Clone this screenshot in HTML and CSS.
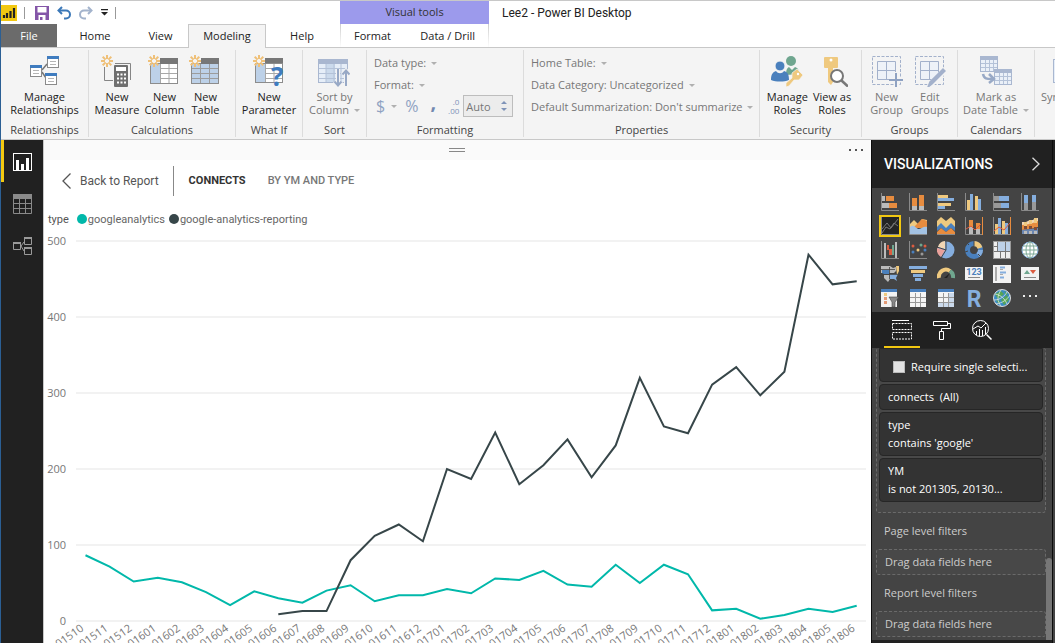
FILE: index.html
```html
<!DOCTYPE html>
<html lang="en">
<head>
<meta charset="utf-8">
<title>Lee2 - Power BI Desktop</title>
<link rel="stylesheet" href="styles.css">
</head>
<body>
<svg class="defs" aria-hidden="true">
  <defs>
    <g id="sun" stroke="#efc078" stroke-width="2" fill="none">
      <path d="M6 0v4M6 8v4M0 6h4M8 6h4M1.7 1.7l2.9 2.9M7.4 7.4l2.9 2.9M10.3 1.7L7.4 4.6M4.6 7.4l-2.9 2.9"/>
    </g>
    <g id="note">
      <rect x=".5" y=".5" width="11" height="11" fill="#fff" stroke="#8a8a8a"/>
      <rect width="12" height="3" fill="#3f7cbf"/>
      <path d="M3 5.5h6M3 8.5h6" stroke="#b5b5b5"/>
    </g>
    <g id="minitable">
      <rect x=".5" y=".5" width="17" height="15" fill="#eaf0f8" stroke="#a9b7d0"/>
      <rect width="18" height="4" fill="#a9b7d0"/>
      <path d="M1 7.5h16M1 11.5h16M5.500 4v11M9.500 4v11M13.500 4v11" stroke="#b4c2d8"/>
    </g>
  </defs>
</svg>

<div class="app">
  <header class="top">
    <div class="top-left">
      <div class="quick">
        <svg class="logo" width="16" height="16" viewBox="0 0 16 16"><rect width="16" height="16" fill="#f2c811"/><path d="M3 13v-3M6 13V8M9.500 13V6M13 13V3" stroke="#222" stroke-width="2.200"/></svg>
        <span class="bar"></span>
        <button aria-label="Save"><svg width="14" height="14" viewBox="0 0 14 14"><path d="M0 0h14v14H0z" fill="#8456a8"/><path d="M2.500 1h9v5.500h-9z" fill="#fff"/><path d="M3.500 9h7v5h-7z" fill="#fff"/><path d="M5 11h2.500v3H5z" fill="#8456a8"/></svg></button>
        <button aria-label="Undo"><svg width="14" height="14" viewBox="0 0 14 14" fill="none" stroke="#3b78b8" stroke-width="2"><path d="M5 1L1.500 4.500 5 8"/><path d="M2 4.500h7a4 4 0 0 1 0 8H7"/></svg></button>
        <button aria-label="Redo"><svg width="14" height="14" viewBox="0 0 14 14" fill="none" stroke="#a3b3cc" stroke-width="2"><path d="M9 1l3.500 3.500L9 8"/><path d="M12 4.500H5a4 4 0 0 0 0 8h2"/></svg></button>
        <button aria-label="Customize"><svg width="7" height="7" viewBox="0 0 7 7"><path d="M0 0h7v1.300H0zM0 3h7L3.500 6.500z" fill="#222"/></svg></button>
        <span class="bar"></span>
      </div>
      <nav class="tabs">
        <button class="tab file">File</button>
        <button class="tab home">Home</button>
        <button class="tab view">View</button>
        <button class="tab active">Modeling</button>
        <button class="tab help">Help</button>
      </nav>
    </div>
    <div class="context">
      <div class="context-title">Visual tools</div>
      <div class="context-tabs">
        <button class="tab">Format</button>
        <button class="tab">Data / Drill</button>
      </div>
    </div>
    <div class="window-title">Lee2 - Power BI Desktop</div>
  </header>

  <section class="ribbon">
    <div class="group g-rel">
      <div class="cmds">
        <button class="cmd"><svg width="32" height="32" viewBox="-1 -1 32 32"><path d="M12 14l5-6M12 16l4 6" stroke="#777" stroke-width="1.500" fill="none"/><use href="#note" x="17"/><use href="#note" y="9"/><use href="#note" x="15" y="17"/></svg>Manage<br>Relationships</button>
      </div>
      <div class="name">Relationships</div>
    </div>
    <div class="group g-calc">
      <div class="cmds">
        <button class="cmd"><svg width="32" height="32" viewBox="0 0 32 32"><path d="M3.500 12v13.500H12M14 8.500h15.500V25" fill="none" stroke="#858585"/><rect x="13" y="10" width="14" height="22" rx="1" fill="#707070"/><path d="M15 12h10v4H15z" fill="#fff"/><path d="M16 19.500h9M16 23.500h9M16 27.500h9" stroke="#fff" stroke-width="2" stroke-dasharray="2 1.500"/><use href="#sun"/></svg>New<br>Measure</button>
        <button class="cmd"><svg width="32" height="32" viewBox="0 0 32 32"><rect x="2.500" y="8.500" width="27" height="20" fill="#fff" stroke="#8c8c8c"/><path d="M3 9h9v19H3z" fill="#bdd1e8"/><path d="M12 3h18v6H12z" fill="#777"/><path d="M12.500 9v19M21 9v19M12 13.500h17M12 18.500h17M12 23.500h17" stroke="#a8a8a8"/><use href="#sun"/></svg>New<br>Column</button>
        <button class="cmd"><svg width="32" height="32" viewBox="0 0 32 32"><rect x="2.500" y="8.500" width="27" height="20" fill="#bdd1e8" stroke="#8c8c8c"/><path d="M12 3h18v6H12z" fill="#777"/><path d="M11.500 9v19M20.500 9v19M3 13.500h26M3 18.500h26M3 23.500h26" stroke="#9c9c9c"/><use href="#sun"/></svg>New<br>Table</button>
      </div>
      <div class="name">Calculations</div>
    </div>
    <div class="group g-what">
      <div class="cmds">
        <button class="cmd"><svg width="32" height="32" viewBox="0 0 32 32"><rect x="2.500" y="8.500" width="27" height="19" fill="#fff" stroke="#8c8c8c"/><path d="M3 9h9v18H3z" fill="#bdd1e8"/><path d="M12 3h18v5H12z" fill="#777"/><path d="M12.500 9v18M21 9v18M12 13.500h17M12 18.500h17M12 23.500h17" stroke="#a8a8a8"/><text x="18" y="31" class="qmark">?</text><use href="#sun"/></svg>New<br>Parameter</button>
      </div>
      <div class="name">What If</div>
    </div>
    <div class="group g-sort">
      <div class="cmds">
        <button class="cmd off"><svg width="32" height="32" viewBox="0 0 32 32"><rect x=".5" y="4.500" width="29" height="23" fill="#e6eef8" stroke="#a9b7d0"/><path d="M8 9h9v18H8z" fill="#cbdaec"/><path d="M0 4h30v5H0z" fill="#a9b7d0"/><path d="M8 9v18M16 9v18M23 9v18M1 13.500h28M1 18.500h28M1 23.500h28" stroke="#b4c2d8"/><path d="M20 14v16M16.500 26.500L20 30.500l3.500-4M28 31V16M24.500 19.500L28 15.500l3.500 4" stroke="#f4f4f4" stroke-width="4" fill="none"/><path d="M20 14v16M16.500 26.500L20 30.500l3.500-4M28 31V16M24.500 19.500L28 15.500l3.500 4" stroke="#98a9c6" stroke-width="2" fill="none"/></svg>Sort by<br>Column <i class="caret"></i></button>
      </div>
      <div class="name">Sort</div>
    </div>
    <div class="group g-format">
      <div class="rows">
        <button class="line">Data type: <i class="caret"></i></button>
        <button class="line">Format: <i class="caret"></i></button>
        <div class="fmt">
          <button class="sym">$</button><i class="caret"></i>
          <button class="sym">%</button>
          <button class="sym comma">,</button>
          <label class="dec" for="decimals"><span>.0</span><span>.00</span></label>
          <span class="spin">
            <input id="decimals" type="text" value="Auto">
            <span class="steps"><button aria-label="More decimals"><i class="up"></i></button><button aria-label="Fewer decimals"><i class="down"></i></button></span>
          </span>
        </div>
      </div>
      <div class="name">Formatting</div>
    </div>
    <div class="group g-props">
      <div class="rows">
        <button class="line">Home Table: <i class="caret"></i></button>
        <button class="line">Data Category: Uncategorized <i class="caret"></i></button>
        <button class="line">Default Summarization: Don't summarize <i class="caret"></i></button>
      </div>
      <div class="name">Properties</div>
    </div>
    <div class="group g-sec">
      <div class="cmds">
        <button class="cmd"><svg width="32" height="32" viewBox="0 0 32 32"><circle cx="20" cy="6" r="5" fill="#6fa68f"/><path d="M15 20c0-5 1-7 3-8l3 3 3-3c3 1 4 3 4 7z" fill="#6fa68f"/><circle cx="9" cy="11" r="5" fill="#4a80bd" stroke="#f4f4f4"/><path d="M0 25c0-6 2-8 5-9 2 3 6 3 8 0 4 1 5 4 5 9-5 2-13 2-18 0z" fill="#4a80bd"/><path d="M26 14l6 6-4 5-5 0-5 6-3 1v-4l6-5v-5z" fill="#efc97f" stroke="#f4f4f4" stroke-width=".7"/><circle cx="27" cy="19" r="1.200" fill="#fff"/></svg>Manage<br>Roles</button>
        <button class="cmd"><svg width="32" height="32" viewBox="0 0 32 32"><path d="M8 3q0-1 1-1h12q1 0 1 1v9q0 1-1 1h-4v14l-2 3-3-3V13H9q-1 0-1-1z" fill="#efc97f"/><circle cx="15" cy="5" r="1.500" fill="#fff"/><circle cx="21" cy="21" r="6" fill="#fff" stroke="#777" stroke-width="2"/><path d="M25.500 25.500L32 31.500" stroke="#777" stroke-width="2.600"/></svg>View as<br>Roles</button>
      </div>
      <div class="name">Security</div>
    </div>
    <div class="group g-groups">
      <div class="cmds">
        <button class="cmd off"><svg width="32" height="32" viewBox="0 0 32 32" fill="none" stroke="#a3b1cb"><rect x="1.500" y="1.500" width="28" height="28" stroke-dasharray="3 1.500"/><path d="M6.500 6.500h18v18h-18zM15.500 6.500v18M6.500 15.500h18" fill="#eef2f8"/><path d="M25 17v15M18 25h14" stroke="#f4f4f4" stroke-width="4"/><path d="M25 18v14M18 25h14" stroke="#8fa2c2" stroke-width="2"/></svg>New<br>Group</button>
        <button class="cmd off"><svg width="32" height="32" viewBox="0 0 32 32" fill="none" stroke="#a3b1cb"><rect x="1.500" y="1.500" width="28" height="28" stroke-dasharray="3 1.500"/><path d="M6.500 6.500h18v18h-18zM15.500 6.500v18M6.500 15.500h18" fill="#eef2f8"/><path d="M15 31L32 14" stroke="#f4f4f4" stroke-width="6"/><path d="M14 32l2-5 13-13 2 2-13 13z" fill="#a3b1cb" stroke-width="1.500"/></svg>Edit<br>Groups</button>
      </div>
      <div class="name">Groups</div>
    </div>
    <div class="group g-cal">
      <div class="cmds">
        <button class="cmd off"><svg width="32" height="32" viewBox="0 0 32 32"><use href="#minitable" y="1"/><use href="#minitable" x="14" y="14"/><path d="M3 19c1 5 4 5 9 5M9 19l5 5-5 4" stroke="#98a9c6" stroke-width="2.500" fill="none"/></svg>Mark as<br>Date Table <i class="caret"></i></button>
      </div>
      <div class="name">Calendars</div>
    </div>
    <div class="group g-sync">
      <div class="cmds">
        <button class="cmd off"><svg width="32" height="32" viewBox="0 0 32 32"><rect x=".5" y="4.500" width="28" height="23" fill="#e6eef8" stroke="#a9b7d0"/></svg>Sync</button>
      </div>
    </div>
  </section>

  <div class="work">
    <nav class="rail">
      <button class="on" aria-label="Report view"><svg width="19" height="18" viewBox="0 0 19 18"><rect x=".5" y=".5" width="18" height="17" fill="none" stroke="#fff"/><path d="M4.500 17V7M9.500 17v-6M14.500 17V5" stroke="#fff" stroke-width="3"/></svg></button>
      <button aria-label="Data view"><svg width="19" height="20" viewBox="0 0 19 20" fill="none" stroke="#8a8a8a"><path d="M0 2.500h19" stroke-width="5"/><path d="M.5 4v15.500h18V4M6.500 4v15M12.500 4v15M0 9.500h19M0 14.500h19"/></svg></button>
      <button aria-label="Relationships view"><svg width="19" height="18" viewBox="0 0 19 18" fill="none" stroke="#9a9a9a"><path d="M.5 5.500h7v7h-7zM11.500 .5h7v7h-7zM11.500 10.500h7v7h-7zM8 9l3-4M8 9l3 5"/><path d="M0 6h8M11 1h8M11 11h8" stroke-width="2"/></svg></button>
    </nav>

    <main class="canvas">
      <div class="strip"><span></span><span class="grip"></span><button class="dots" aria-label="More options"><i></i><i></i><i></i></button></div>
      <div class="drill">
        <button class="back"><svg width="9" height="16" viewBox="0 0 9 16" fill="none" stroke="#555" stroke-width="1.300"><path d="M8.500 .5L1 8l7.500 7.500"/></svg>Back to Report</button>
        <h1>CONNECTS</h1>
        <span class="by">BY YM AND TYPE</span>
      </div>
      <div class="legend"><span class="ltitle">type</span><span class="key teal">googleanalytics</span><span class="key dark">google-analytics-reporting</span></div>
      <svg class="chart" id="chart" viewBox="0 0 827 420" role="img" aria-label="Connects by YM and type"></svg>
    </main>

    <aside class="panel">
      <header class="phead"><h2>VISUALIZATIONS</h2><button aria-label="Collapse"><svg width="8" height="14" viewBox="0 0 8 14" fill="none" stroke="#ddd" stroke-width="1.300"><path d="M.5 .8L7 7 .5 13.200"/></svg></button></header>
      <div class="viz">
        <button aria-label="Stacked bar"><svg viewBox="0 0 18 18"><path d="M.5 0v17.500H18" class="ax"/><path d="M1 3h3v5H1zM1 10h7v5H1z" fill="#bbb"/><path d="M5 3h8v5H5zM8 10h8v5H8z" fill="#e78c3f"/></svg></button>
        <button aria-label="Stacked column"><svg viewBox="0 0 18 18"><path d="M.5 0v17.500H18" class="ax"/><path d="M3 12h5v5H3zM10 13h5v4h-5z" fill="#bbb"/><path d="M3 5h5v8H3zM10 2h5v11h-5z" fill="#e78c3f"/></svg></button>
        <button aria-label="Clustered bar"><svg viewBox="0 0 18 18"><path d="M.5 0v17.500H18" class="ax"/><path d="M1 2h10v3H1zM1 10h13v3H1z" fill="#efc97f"/><path d="M1 5h16v3H1zM1 13h7v3H1z" fill="#85aede"/></svg></button>
        <button aria-label="Clustered column"><svg viewBox="0 0 18 18"><path d="M.5 0v17.500H18" class="ax"/><path d="M2 7h3v10H2zM10 3h3v14h-3z" fill="#efc97f"/><path d="M5 1h3v16H5zM13 6h3v11h-3z" fill="#85aede"/></svg></button>
        <button aria-label="100% bar"><svg viewBox="0 0 18 18"><path d="M.5 0v17.500H18" class="ax"/><path d="M1 3h5v5H1zM1 10h7v5H1z" fill="#999"/><path d="M6 3h10v5H6zM8 10h8v5H8z" fill="#85aede"/></svg></button>
        <button aria-label="100% column"><svg viewBox="0 0 18 18"><path d="M.5 0v17.500H18" class="ax"/><path d="M3 10h4v7H3zM11 8h4v9h-4z" fill="#999"/><path d="M3 2h4v8H3zM11 2h4v7h-4z" fill="#85aede"/></svg></button>

        <button class="picked" aria-label="Line"><svg viewBox="0 0 18 18"><path d="M.5 0v17.500H18" class="ax"/><path d="M1 12l5-6 4 5 7-9M1 16l4-6 4 2 4-6 4 3" fill="none" stroke="#777"/></svg></button>
        <button aria-label="Area"><svg viewBox="0 0 18 18"><path d="M1 7l4-4 4 4 4-5 5 1v7H1z" fill="#efc97f"/><path d="M5 10l8-8 5 2v7H5z" fill="#e78c3f"/><path d="M1 10c4-4 6 2 9 2s4-3 8-2v7H1z" fill="#a3c2e3"/><path d="M.5 0v17.500H18" class="ax"/></svg></button>
        <button aria-label="Stacked area"><svg viewBox="0 0 18 18"><path d="M0 4l4-4 5 4 5-4 4 4v8l-4-4-5 4-5-4-4 4z" fill="#efc97f"/><path d="M0 10l4-4 5 5 5-5 4 4v4l-4-3-5 4-5-4-4 3z" fill="#4a80bd"/><path d="M0 15l4-4 5 4 5-4 4 4v2H0z" fill="#e78c3f"/><path d="M0 17.500h18" class="ax"/></svg></button>
        <button aria-label="Line and stacked column"><svg viewBox="0 0 18 18"><path d="M.5 0v17.500H17.500" class="ax"/><path d="M17.500 0v18" stroke="#e78c3f"/><path d="M4 3h4v7H4zM11 6h4v6h-4z" fill="#e78c3f"/><path d="M4 10h4v7H4zM11 12h4v5h-4z" fill="#bbb"/><path d="M1 12l5-3 4 4 6-6" fill="none" stroke="#e05a3a"/></svg></button>
        <button aria-label="Line and clustered column"><svg viewBox="0 0 18 18"><path d="M.5 0v17.500H17.500" class="ax"/><path d="M17.500 0v18" stroke="#e78c3f"/><path d="M2 7h3v10H2zM9 4h3v13H9z" fill="#efc97f"/><path d="M5 1h3v16H5zM12 6h3v11h-3z" fill="#85aede"/><path d="M1 14l5-4 5 3 6-7" fill="none" stroke="#e05a3a"/></svg></button>
        <button aria-label="Ribbon"><svg viewBox="0 0 18 18"><path d="M1 5h4l4-2h3l2-2h3v6l-8 2-8 1z" fill="#f1d6b4"/><path d="M1 8l8-1 8-3v6l-8 2-8 1z" fill="#e78c3f"/><path d="M1 13l8-1 8-1v6H1z" fill="#6c87b1"/><path d="M3 5h3v4H3zM8 3h3v4H8zM13 1h3v5h-3z" fill="#efc97f"/><path d="M3 9h3v3H3zM8 9h3v3H8zM13 10h3v3h-3z" fill="#804b35"/><path d="M3 14h3v3H3zM8 14h3v3H8zM13 14h3v3h-3z" fill="#bbb"/></svg></button>

        <button aria-label="Waterfall"><svg viewBox="0 0 18 18"><path d="M.5 0v17.500H18" class="ax"/><path d="M3 2h2v15H3zM14 1h2v16h-2z" fill="#bbb"/><path d="M6 4h2v5H6zM8 8h3v6H8z" fill="#dc5c40"/><path d="M11 4h2v10h-2z" fill="#6fa68f"/></svg></button>
        <button aria-label="Scatter"><svg viewBox="0 0 18 18"><path d="M.5 0v17.500H18" class="ax"/><g><circle cx="4" cy="5" r="1.500" fill="#dc5c40"/><circle cx="12" cy="4" r="1.500" fill="#6fa68f"/><circle cx="9" cy="9" r="1.500" fill="#efc97f"/><circle cx="4" cy="11" r="1.500" fill="#4a80bd"/><circle cx="16" cy="5" r="1.500" fill="#dc5c40"/><circle cx="16" cy="9" r="1.500" fill="#4a80bd"/><circle cx="13" cy="13" r="1.500" fill="#999"/></g></svg></button>
        <button aria-label="Pie"><svg viewBox="0 0 18 18"><circle cx="9" cy="9" r="8.500" fill="#85aede"/><path d="M8 8V0A8 8 0 0 0 1 6z" fill="#f1d6b4"/><path d="M8 9L0 7a9 9 0 0 0 4 9z" fill="#e9a19b"/><path d="M9 0v9L4 17M9 9L0 6" stroke="#444" fill="none"/></svg></button>
        <button aria-label="Donut"><svg viewBox="0 0 18 18" fill="none" stroke-width="5"><circle cx="9" cy="9" r="6.500" stroke="#4a80bd"/><path d="M9 2.500A6.500 6.500 0 0 1 15 7" stroke="#efc97f"/><path d="M15.500 9A6.500 6.500 0 0 1 13 14" stroke="#85aede"/><path d="M3 10l-3 1M9 0v5M13 13l3 3M4 4L1 1" stroke="#444" stroke-width="1"/></svg></button>
        <button aria-label="Treemap"><svg viewBox="0 0 18 18"><path d="M0 0h18v18H0z" fill="#eee"/><path d="M5 1h7v9H5zM13 1h4v9h-4z" fill="#bdd1e8"/><path d="M4.500 0v10M12.500 0v10M0 10.500h18M7.500 11v7M12.500 11v7M0 5.500h4" stroke="#777"/><rect x=".5" y=".5" width="17" height="17" fill="none" stroke="#999"/></svg></button>
        <button aria-label="Map"><svg viewBox="0 0 18 18" fill="none" stroke="#7eaa98"><circle cx="9" cy="9" r="8" fill="#fff" stroke="#85aede"/><ellipse cx="9" cy="9" rx="4" ry="8"/><path d="M9 1v16M1 9h16M2 5h14M2 13h14"/></svg></button>

        <button aria-label="Filled map"><svg viewBox="0 0 18 18"><path d="M0 1h9l3 2 3-1v4l-2 2H0z" fill="#bbb"/><path d="M1 5h7v4H3L1 8z" fill="#4a80bd"/><path d="M3 10h6v4l-2 3-4-4z" fill="#bbb"/><path d="M9 9h8l-2 4 1 3-3-2H9z" fill="#85aede"/><path d="M15 1h3v5l-2 4z" fill="#efc97f"/><path d="M0 4.500h14M8.500 2v12M3 9.500h14" stroke="#444" stroke-width=".8"/></svg></button>
        <button aria-label="Funnel"><svg viewBox="0 0 18 18"><path d="M0 1h18v3H0z" fill="#85aede"/><path d="M2 5h14v3H2z" fill="#efc97f"/><path d="M4 9h10v3H4z" fill="#85aede"/><path d="M6 13h6v3H6z" fill="#85aede"/></svg></button>
        <button aria-label="Gauge"><svg viewBox="0 0 18 18" fill="none" stroke-width="4"><path d="M2 13a7 7 0 0 1 11-7" stroke="#efc97f"/><path d="M13 6a7 7 0 0 1 3 7" stroke="#6fa68f"/><path d="M7 13l6-5-3 5z" fill="#222" stroke="none"/></svg></button>
        <button aria-label="Card"><svg viewBox="0 0 18 18"><path d="M0 2h18v13H0z" fill="#f2f2f2"/><text x="9" y="10" class="n123">123</text><path d="M3 12.500h12" stroke="#888"/></svg></button>
        <button aria-label="Multi-row card"><svg viewBox="0 0 18 18"><path d="M0 0h18v18H0z" fill="#f2f2f2"/><path d="M2 2h2v14H2z" fill="#aaa"/><path d="M7 2.500h5M7 7.500h6M7 12.500h4" stroke="#85aede" stroke-width="2"/><path d="M7 4.500h3M7 9.500h3" stroke="#aaa"/></svg></button>
        <button aria-label="KPI"><svg viewBox="0 0 18 18"><path d="M0 2h18v13H0z" fill="#f2f2f2"/><path d="M3 9l3-4 3 4z" fill="#6fa68f"/><path d="M9 5h6l-3 4z" fill="#dc5c40"/><path d="M3 12.500h12" stroke="#888"/></svg></button>

        <button aria-label="Slicer"><svg viewBox="0 0 18 18"><path d="M0 1h16v17H0z" fill="#f2f2f2"/><path d="M0 0h16v3H0z" fill="#4a80bd"/><path d="M3 4h3v3H3z" fill="#efc97f"/><path d="M3 8h3v3H3zM3 12h3v3H3z" fill="#e39a76"/><path d="M8 8h10l-4 5v5h-3v-5z" fill="#888" stroke="#444" stroke-width=".6"/></svg></button>
        <button aria-label="Table"><svg viewBox="0 0 18 18"><path d="M1 1h16v17H1z" fill="#f5f5f5"/><path d="M1 0h16v3H1z" fill="#4a80bd"/><path d="M6.500 4v14M11.500 4v14M1 8.500h16M1 13.500h16" stroke="#999"/></svg></button>
        <button aria-label="Matrix"><svg viewBox="0 0 18 18"><path d="M1 1h16v17H1z" fill="#f5f5f5"/><path d="M1 0h16v3H1z" fill="#4a80bd"/><path d="M12 4h5v14h-5zM1 14h16v4H1z" fill="#cbdaec"/><path d="M6.500 4v14M11.500 4v14M1 8.500h16M1 13.500h16" stroke="#999"/></svg></button>
        <button aria-label="R script visual"><svg viewBox="0 0 18 18"><text x="9" y="18" class="rbig">R</text></svg></button>
        <button aria-label="ArcGIS map"><svg viewBox="0 0 18 18" fill="none"><circle cx="9" cy="9" r="8.500" fill="#3b8bc4" stroke="#ddd"/><path d="M2 5l6-3 3 3-6 5zM8 11l6-5 2 5-5 5zM11 2l4 3-2 1zM3 11l4 1-1 3z" fill="#55a455"/><path d="M1 11c6 0 11-4 13-8M3 15c6-1 11-4 14-9M2 5c6 1 10 5 12 10M8 1c-4 6-4 11 0 16" stroke="#d9e6e0" stroke-width=".8"/></svg></button>
        <button aria-label="More visuals"><svg viewBox="0 0 18 18"><path d="M2 6h2v2H2zM8 6h2v2H8zM14 6h2v2h-2z" fill="#eee"/></svg></button>
      </div>
      <div class="ptabs">
        <button class="on" aria-label="Fields"><svg width="20" height="20" viewBox="0 0 20 20" fill="none" stroke="#fff"><path d="M0 .5h17"/><path d="M.5 3.500h19v6H.5zM.5 12.500h19v6.500H.5z" stroke-dasharray="2 1"/></svg></button>
        <button aria-label="Format"><svg width="20" height="20" viewBox="0 0 20 20" fill="none" stroke="#fff"><path d="M1.500 1.500h14v4h-14zM15.500 3.500h3v5h-9v3M7.500 11.500h4v8h-4z"/></svg></button>
        <button aria-label="Analytics"><svg width="20" height="20" viewBox="0 0 20 20" fill="none" stroke="#fff"><circle cx="8.500" cy="8.500" r="8"/><path d="M14.500 14.500l5 5" stroke-width="1.500"/><path d="M1 9l5-3 3 2 5-5M4.500 11v4M7.500 9v7M10.500 10v6M13.500 7v7"/></svg></button>
      </div>
      <div class="filters">
        <div class="well">
          <div class="card first"><label for="single"><input id="single" type="checkbox">Require single selecti...</label></div>
          <div class="card">connects &nbsp;(All)</div>
          <div class="card">type<br>contains 'google'</div>
          <div class="card">YM<br>is not 201305, 20130...</div>
        </div>
        <h3>Page level filters</h3>
        <div class="drop">Drag data fields here</div>
        <h3>Report level filters</h3>
        <div class="drop">Drag data fields here</div>
        <span class="thumb"></span>
      </div>
    </aside>
    <div class="next"></div>
  </div>
</div>
<script src="chart.js"></script>
</body>
</html>
```
FILE: styles.css
```css
* { box-sizing: border-box; }

body {
  margin: 0;
  font-family: "Open Sans", "Noto Sans", sans-serif;
  font-size: 11px;
  color: #222;
  background: #fff;
}

button {
  margin: 0;
  padding: 0;
  border: 0;
  background: none;
  font: inherit;
  color: inherit;
}

svg { display: block; }
.defs { position: absolute; width: 0; height: 0; }

.app {
  display: flex;
  flex-direction: column;
  height: 100vh;
  overflow: hidden;
  border-left: 1px solid #2b5f94;
  border-top: 1px solid #c8c8c8;
}

/* Title bar and tabs */
.top { display: flex; flex: none; border-bottom: 1px solid #c8c8c8; }
.top-left { display: flex; flex-direction: column; width: 339px; }
.quick { display: flex; align-items: center; gap: 8px; height: 23px; }
.quick .bar { width: 1px; height: 12px; margin: 0 2px 0 -1px; background: #999; }
.tabs { display: flex; }
.tab { height: 23px; padding: 0 14px; color: #222; white-space: nowrap; }
.file { width: 56px; background: #6b6b6b; color: #fff; }
.home { width: 76px; }
.view { width: 55px; }
.help { width: 72px; }
.active {
  width: 78px;
  height: 24px;
  margin-bottom: -1px;
  padding-bottom: 2px;
  border: 1px solid #c8c8c8;
  border-bottom: 0;
  background: #f4f4f4;
}
.context { display: flex; flex-direction: column; width: 149px; }
.context-title { height: 23px; line-height: 21px; text-align: center; background: #9c9aec; color: #333; }
.context-tabs {
  display: flex;
  justify-content: space-between;
  border: solid;
  border-width: 0 1px;
  border-image: linear-gradient(#ccc, #fff) 1;
}
.context-tabs .tab { padding: 0 13px; }
.window-title { padding: 5px 13px; font-family: Roboto, sans-serif; font-size: 12px; line-height: 15px; }

/* Ribbon */
.ribbon { display: flex; flex: none; height: 92px; background: #f4f4f4; border-bottom: 1px solid #c8c8c8; overflow: hidden; }
.group {
  display: flex;
  flex: none;
  flex-direction: column;
  justify-content: space-between;
  margin: 2px 0;
  padding: 5px 0 1px;
  border-right: 1px solid #dcdcdc;
}
.cmds { display: flex; justify-content: center; }
.cmd { line-height: 13px; text-align: center; white-space: nowrap; }
.cmd svg { margin: 0 auto 3px; }
.name { line-height: 13px; text-align: center; color: #444; }
.off, .line { color: #777; }
.caret {
  display: inline-block;
  margin-left: 2px;
  border: 3px solid transparent;
  border-top-color: #b0b0b0;
  border-bottom: 0;
  vertical-align: 2px;
}
.g-rel { width: 88px; }
.g-calc { width: 147px; }
.g-calc .cmds { gap: 5px; padding-right: 8px; }
.g-what { width: 67px; }
.g-sort { width: 64px; }
.g-format { width: 157px; }
.g-props { width: 236px; }
.g-sec { width: 102px; }
.g-sec .cmds { gap: 5px; padding-right: 3px; }
.g-groups { width: 96px; }
.g-groups .cmds { gap: 8px; }
.g-cal { width: 77px; }
.g-sync { flex: 1 0 auto; border: 0; padding-left: 6px; }
.g-sync .cmds { justify-content: flex-start; }
.g-sync .cmd { text-align: left; }
.g-sync .cmd svg { margin-left: 12px; }

.rows { display: flex; flex-direction: column; align-items: flex-start; margin-top: -4px; padding-left: 7px; }
.line { height: 22px; white-space: nowrap; }
.fmt { display: flex; align-items: center; height: 22px; padding-left: 2px; gap: 8px; }
.sym { font-size: 16px; line-height: 20px; color: #8fa2c2; }
.fmt .caret { margin: 0 0 0 -2px; }
.comma { font-size: 20px; font-weight: 700; line-height: 10px; padding: 0 4px 8px; color: #7389b0; }
.dec { display: flex; flex-direction: column; align-items: flex-end; font-size: 8px; line-height: 9px; color: #7f93b8; }
.spin { display: flex; align-items: center; width: 50px; height: 22px; margin-left: -4px; border: 1px solid #bdbdbd; background: #ececec; }
.spin input { width: 34px; padding: 0 0 0 2px; border: 0; background: none; font: inherit; color: #777; }
.steps { display: flex; flex-direction: column; gap: 4px; }
.steps button { display: block; padding: 0 3px; }
.up, .down { display: block; border: 3px solid transparent; }
.up { border-top: 0; border-bottom-color: #7f93b8; }
.down { border-bottom: 0; border-top-color: #7f93b8; }
.qmark { font: 700 26px "Open Sans", sans-serif; fill: #3f7cbf; }

/* Workspace */
.work { display: flex; flex: 1; min-height: 0; }
.rail { flex: none; width: 42px; background: #212121; }
.rail button { display: flex; align-items: center; justify-content: center; width: 42px; height: 42px; border-left: 3px solid transparent; padding: 2px 2px 0 0; }
.rail .on { border-color: #f2c811; }

.canvas { flex: 1; min-width: 0; overflow: hidden; border-left: 1px solid #c8c8c8; }
.strip { display: flex; justify-content: space-between; align-items: center; height: 20px; background: #fafafa; }
.grip { width: 16px; height: 4px; border: solid #888; border-width: 1px 0; }
.dots { display: flex; gap: 4px; padding-right: 8px; }
.strip > :first-child { width: 20px; }
.dots i { width: 2px; height: 2px; background: #555; }
.drill { display: flex; align-items: center; height: 41px; padding-left: 18px; }
.back { display: flex; align-items: center; gap: 9px; height: 30px; padding-right: 14px; border-right: 1px solid #888; font-family: Roboto, sans-serif; font-size: 12px; color: #555; }
.drill h1 { margin: 0 22px 0 15px; font: 700 11px Roboto, sans-serif; color: #333; }
.by { font: 500 11px Roboto, sans-serif; color: #777; }
.legend { display: flex; align-items: center; height: 16px; margin: 10px 0 0; padding-left: 4px; font-family: Roboto, sans-serif; color: #666; }
.ltitle { margin-right: 8px; color: #555; }
.key { display: flex; align-items: center; margin-right: 4px; }
.key::before { content: ""; width: 10px; height: 10px; margin-right: 1px; border-radius: 50%; background: #01b8aa; }
.dark::before { background: #374649; }
.chart { width: 100%; overflow: visible; }
.grid { stroke: #f2f2f2; stroke-width: 2; }
.chart text { font-size: 11px; fill: #777; text-anchor: end; }
.series { fill: none; stroke-width: 2; }
.series.teal { stroke: #01b8aa; }
.series.dark { stroke: #374649; }

/* Visualizations pane */
.panel { display: flex; flex: none; flex-direction: column; width: 182px; border: solid #0c0c0c; border-width: 0 1px; background: #444; color: #eee; }
.phead { display: flex; align-items: center; justify-content: space-between; height: 48px; padding: 0 12px; background: #212121; }
.phead h2 { margin: 0; font: 500 14px Roboto, sans-serif; color: #fff; }
.viz { display: grid; grid-template-columns: repeat(6, 18px); gap: 6px 10px; padding: 5px 9px; }
.viz svg { width: 18px; height: 18px; }
.viz .ax { fill: none; stroke: #8a8a8a; }
.picked { background: #252525; outline: 2px solid #f2c811; }
.n123 { font: 700 9px Roboto, sans-serif; fill: #4a80bd; text-anchor: middle; }
.rbig { font: 700 23px Roboto, sans-serif; fill: #85aede; text-anchor: middle; }
.ptabs { display: flex; flex: none; gap: 4px; height: 36px; padding-left: 12px; background: #212121; }
.ptabs button { display: flex; justify-content: center; width: 36px; padding-top: 8px; border-bottom: 2px solid transparent; }
.ptabs .on { border-color: #f2c811; }
.filters { position: relative; flex: 1; min-height: 0; overflow: hidden; border-bottom: 3px solid #212121; padding: 0 6px 0 4px; }
.well { display: flex; flex-direction: column; gap: 2px; padding: 0 2px 10px; border: 1px dashed #6a6a6a; border-top: 0; border-radius: 3px; background: #484848; }
.card { padding: 3px 8px; border: 1px solid #262626; border-radius: 4px; background: #333; line-height: 18px; color: #fff; white-space: nowrap; }
.first { border-top-left-radius: 0; border-top-right-radius: 0; padding: 9px 8px 5px; }
.first label { display: flex; align-items: center; }
.first input { width: 12px; height: 12px; margin: 0 6px 0 5px; appearance: none; border: 1px solid #bbb; background: #e3e3e3; }
.filters h3 { margin: 0; padding: 0 8px; font-size: 11px; font-weight: 400; line-height: 36px; color: #ccc; }
.drop { padding: 0 8px; border: 1px dashed #6a6a6a; border-radius: 3px; background: #484848; line-height: 24px; color: #ccc; }
.thumb { position: absolute; right: 0; bottom: 0; width: 6px; height: 82px; border-radius: 3px 3px 0 0; background: #777; }
.next { flex: none; width: 2px; background: linear-gradient(#212121 48px, #444 48px); }
```
FILE: chart.js
```js
const chart = document.getElementById('chart');
const teal = [86.5, 71.5, 52, 57, 51, 38, 21, 39, 30, 24, 40, 47, 26, 34, 34, 42, 36.5, 56, 54, 66, 48, 45, 74, 50, 74, 61.5, 14, 16, 3, 8, 16, 12, 20];
const dark = [9, 13, 13, 80, 112, 127, 105, 200, 187, 248, 180, 205, 239, 189, 231, 320, 256, 247, 311, 334, 297, 328, 482, 443, 447];

const x = i => 41.5 + i * 24.1;
const y = v => 394 - v * 0.76;

function add(tag, attrs, text) {
  const el = document.createElementNS('http://www.w3.org/2000/svg', tag);
  for (const k in attrs) el.setAttribute(k, attrs[k]);
  if (text !== undefined) el.textContent = text;
  chart.appendChild(el);
}

for (let v = 0; v <= 500; v += 100) {
  add('line', { class: 'grid', x1: 32, x2: 822, y1: y(v), y2: y(v) });
  add('text', { x: 22, y: y(v) + 4 }, v);
}

teal.forEach((_, i) => {
  const m = 9 + i;
  const label = (2015 + Math.floor(m / 12)) * 100 + (m % 12) + 1;
  add('text', { transform: `translate(${x(i) - 1} ${y(0) + 9}) rotate(-35)` }, label);
});

const line = (data, start) => data.map((v, i) => `${x(i + start)},${y(v)}`).join(' ');
add('polyline', { class: 'series teal', points: line(teal, 0) });
add('polyline', { class: 'series dark', points: line(dark, 8) });
```
